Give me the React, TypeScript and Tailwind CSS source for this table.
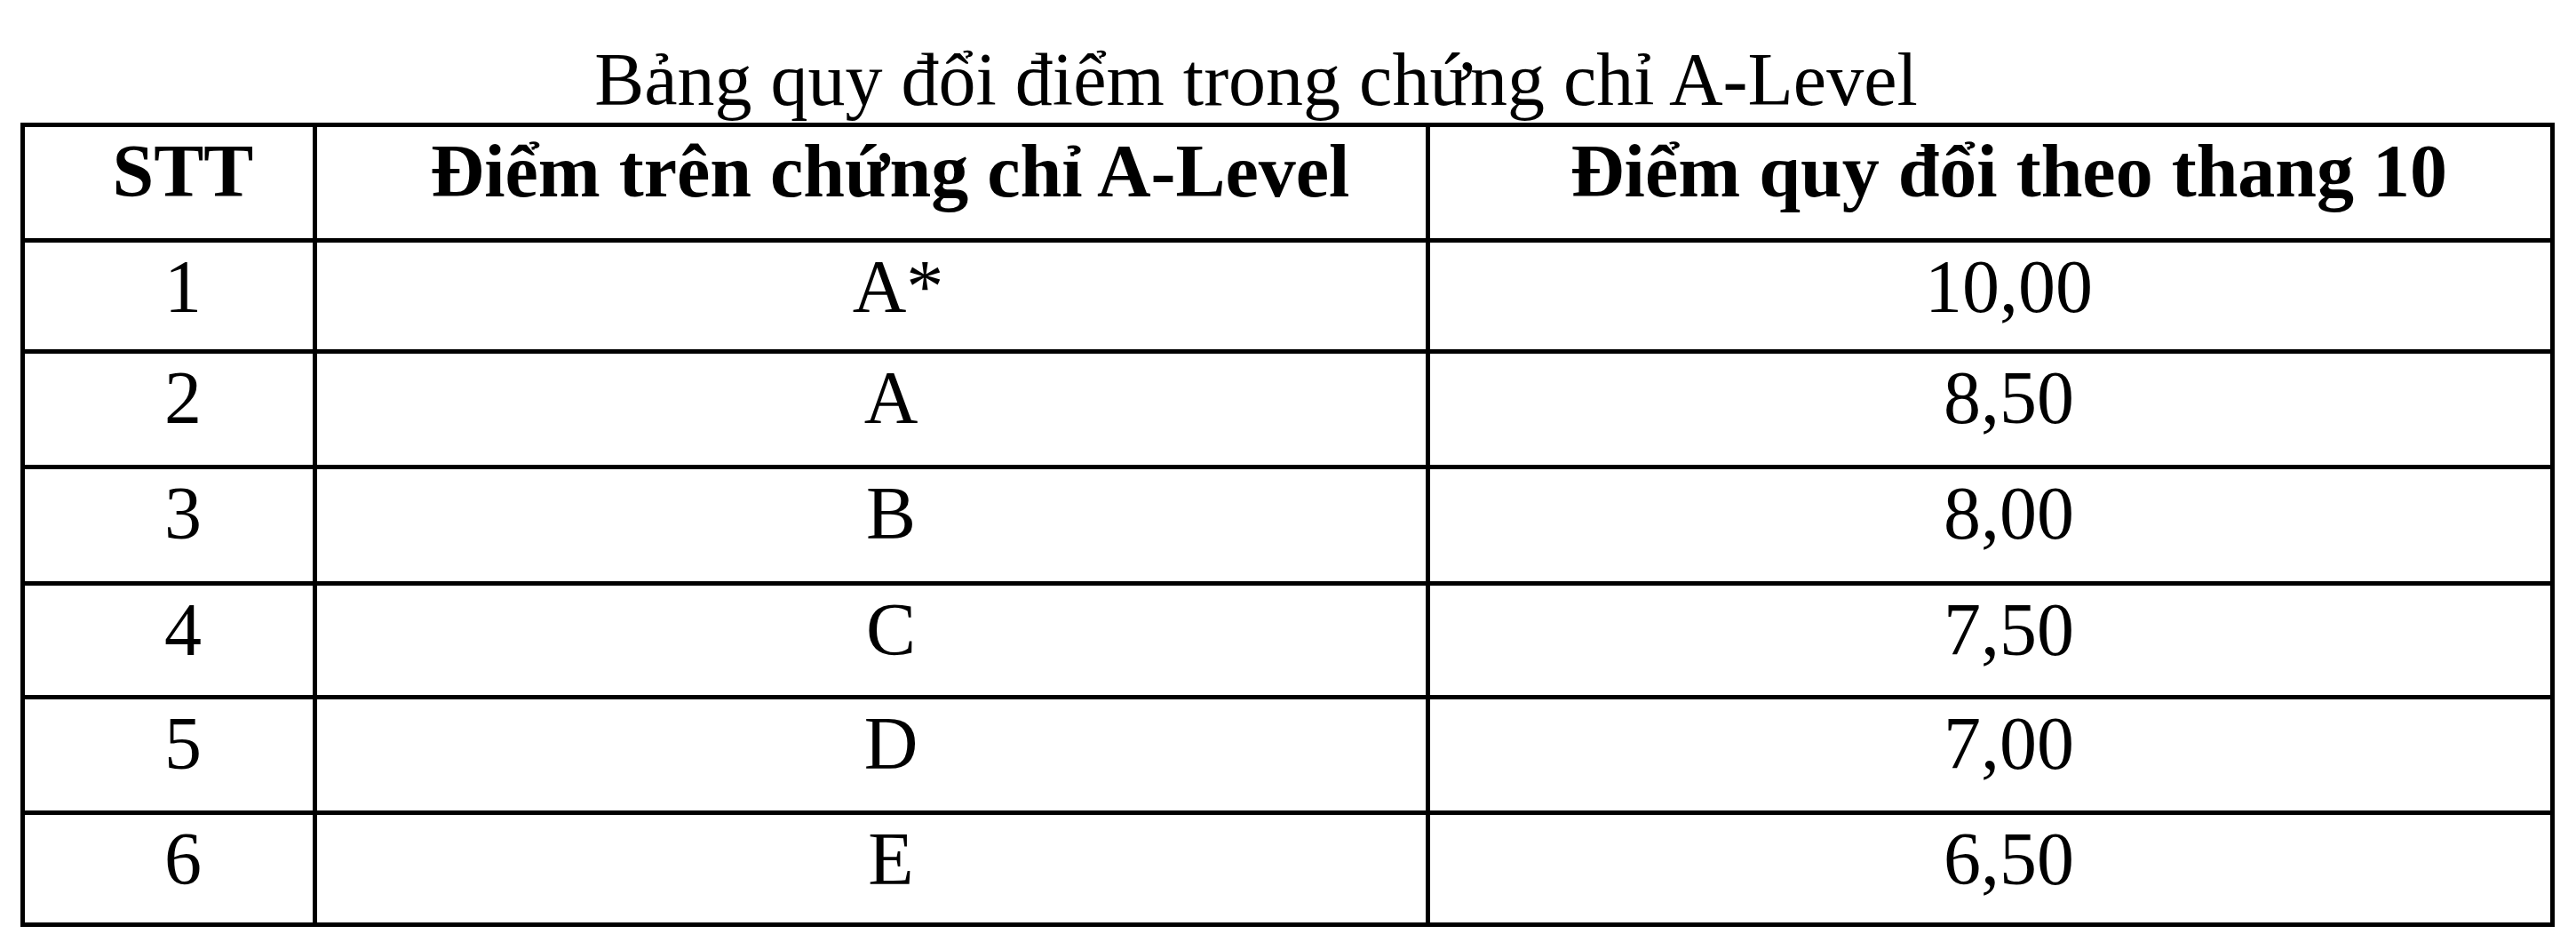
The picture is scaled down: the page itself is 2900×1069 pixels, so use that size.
import React from "react";

const rows: { stt: string; grade: string; score: string; h: string; gp: string }[] = [
  { stt: "1", grade: "A*", score: "10,00", h: "h-[125px]", gp: "pl-[60px]" },
  { stt: "2", grade: "A", score: "8,50", h: "h-[130px]", gp: "pl-[44px]" },
  { stt: "3", grade: "B", score: "8,00", h: "h-[131px]", gp: "pl-[44px]" },
  { stt: "4", grade: "C", score: "7,50", h: "h-[128px]", gp: "pl-[44px]" },
  { stt: "5", grade: "D", score: "7,00", h: "h-[130px]", gp: "pl-[44px]" },
  { stt: "6", grade: "E", score: "6,50", h: "h-[126px]", gp: "pl-[44px]" },
];

const cellBase =
  "border-r-[5px] border-b-[5px] border-black align-top text-center pt-[3px] leading-[93px] p-0";

export default function App() {
  return (
    <div className="w-[2900px] h-[1069px] overflow-hidden bg-white text-black font-['Liberation_Serif','Times_New_Roman',serif]">
      <div className="ml-[24px] w-[2852px] pt-[42px] pr-[72px] text-center text-[84px] leading-[96px] whitespace-nowrap">
        Bảng quy đổi điểm trong chứng chỉ A-Level
      </div>
      <table className="ml-[23px] w-[2853px] table-fixed border-separate border-spacing-0 border-l-[5px] border-t-[5px] border-black text-[84px]">
        <colgroup>
          <col className="w-[329px]" />
          <col className="w-[1253px]" />
          <col className="w-[1266px]" />
        </colgroup>
        <thead>
          <tr>
            <th className={`${cellBase} h-[130px] pl-[32px] font-bold`}>STT</th>
            <th className={`${cellBase} h-[130px] pl-[42px] font-bold`}>
              Điểm trên chứng chỉ A-Level
            </th>
            <th className={`${cellBase} h-[130px] pl-[42px] font-bold`}>
              Điểm quy đổi theo thang 10
            </th>
          </tr>
        </thead>
        <tbody>
          {rows.map((r) => (
            <tr key={r.stt}>
              <td className={`${cellBase} ${r.h} pl-[32px]`}>{r.stt}</td>
              <td className={`${cellBase} ${r.h} ${r.gp}`}>{r.grade}</td>
              <td className={`${cellBase} ${r.h} pl-[42px]`}>{r.score}</td>
            </tr>
          ))}
        </tbody>
      </table>
    </div>
  );
}
